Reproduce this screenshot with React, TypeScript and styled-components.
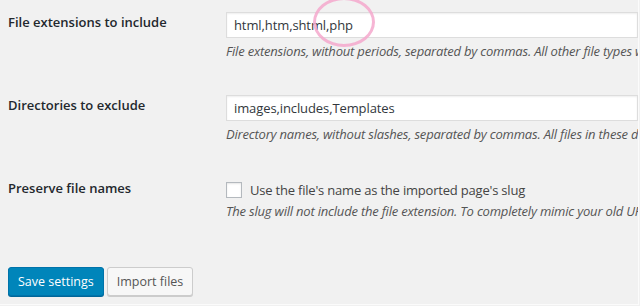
import styled, { createGlobalStyle } from "styled-components";

const GlobalStyle = createGlobalStyle`
  html, body {
    margin: 0;
    padding: 0;
    background: #f1f1f1;
    overflow: hidden;
  }
  body {
    font-family: "Open Sans", "Noto Sans", sans-serif;
    color: #23282d;
  }
`;

const fields = [
  {
    label: "File extensions to include",
    value: "html,htm,shtml,php",
    help: "File extensions, without periods, separated by commas. All other file types will be ignored.",
    marked: true,
  },
  {
    label: "Directories to exclude",
    value: "images,includes,Templates",
    help: "Directory names, without slashes, separated by commas. All files in these directories will be ignored.",
    marked: false,
  },
];

export default function App() {
  return (
    <>
      <GlobalStyle />
      <Page>
        <Form>
          {fields.map((f) => (
            <Row key={f.label}>
              <Label>{f.label}</Label>
              <Field>
                <InputWrap>
                  <TextInput defaultValue={f.value} />
                  {f.marked && <Highlight />}
                </InputWrap>
                <Help>{f.help}</Help>
              </Field>
            </Row>
          ))}
          <Row>
            <Label>Preserve file names</Label>
            <Field>
              <CheckLine>
                <Checkbox type="checkbox" />
                <span>Use the file's name as the imported page's slug</span>
              </CheckLine>
              <Help $tight>
                The slug will not include the file extension. To completely mimic your old URLs, keep the
                directory structure.
              </Help>
            </Field>
          </Row>
          <Actions>
            <Button $primary>Save settings</Button>
            <Button>Import files</Button>
          </Actions>
        </Form>
      </Page>
    </>
  );
}

const Page = styled.div`
  width: 638px;
  height: 304px;
  border-right: 1px solid #fbfbfb;
  border-bottom: 1px solid #fbfbfb;
  overflow: hidden;
`;

const Form = styled.div`
  padding: 12px 0 0 8px;
`;

const Row = styled.div`
  display: grid;
  grid-template-columns: 218px 1fr;
  padding-bottom: 35px;
`;

const Label = styled.div`
  font-size: 13px;
  font-weight: 600;
  line-height: 20px;
  white-space: nowrap;
`;

const Field = styled.div`
  min-width: 0;
`;

const InputWrap = styled.div`
  position: relative;
`;

const TextInput = styled.input`
  box-sizing: border-box;
  display: block;
  width: 100%;
  height: 26px;
  padding: 0 7px;
  margin: 0;
  border: 1px solid #ddd;
  background: #fff;
  box-shadow: inset 0 1px 2px rgba(0, 0, 0, 0.07);
  font-family: "Open Sans", "Noto Sans", sans-serif;
  font-size: 13px;
  letter-spacing: -0.1px;
  color: #32373c;
  outline: none;
`;

const Highlight = styled.span`
  position: absolute;
  left: 87px;
  top: -15px;
  width: 56px;
  height: 44px;
  border: 3px solid rgba(245, 168, 205, 0.85);
  border-radius: 50%;
  pointer-events: none;
`;

const Help = styled.p<{ $tight?: boolean }>`
  margin: ${(p) => (p.$tight ? "0" : "4px")} 0 0;
  font-size: 13px;
  font-style: italic;
  line-height: 18px;
  letter-spacing: -0.2px;
  color: #555;
  white-space: nowrap;
`;

const CheckLine = styled.label`
  display: flex;
  align-items: center;
  gap: 8px;
  height: 24px;
  font-size: 13px;
  letter-spacing: -0.2px;
  color: #444;
  white-space: nowrap;
`;

const Checkbox = styled.input`
  appearance: none;
  box-sizing: border-box;
  width: 16px;
  height: 16px;
  margin: 0;
  border: 1px solid #b4b9be;
  background: #fff;
  box-shadow: inset 0 1px 2px rgba(0, 0, 0, 0.1);
`;

const Actions = styled.div`
  display: flex;
  gap: 3px;
  margin-top: 12px;
`;

const Button = styled.button<{ $primary?: boolean }>`
  height: 29px;
  padding: 0 9px;
  border-radius: 3px;
  font-family: "Open Sans", "Noto Sans", sans-serif;
  font-size: 12.5px;
  line-height: 27px;
  cursor: pointer;
  border: 1px solid ${(p) => (p.$primary ? "#0073aa" : "#ccc")};
  background: ${(p) => (p.$primary ? "#0085ba" : "#f7f7f7")};
  color: ${(p) => (p.$primary ? "#fff" : "#555")};
  box-shadow: 0 1px 0 ${(p) => (p.$primary ? "#006799" : "#ccc")};
`;
